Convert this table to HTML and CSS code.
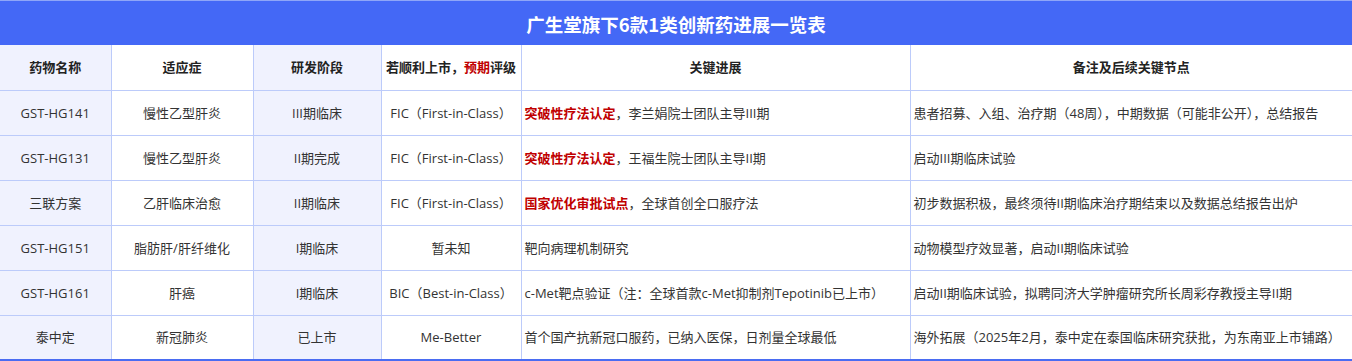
FILE: index.html
```html
<!DOCTYPE html>
<html lang="zh-CN">
<head>
<meta charset="utf-8">
<title>广生堂旗下6款1类创新药进展一览表</title>
<link rel="stylesheet" href="styles.css">
</head>
<body>
<div class="sheet">
  <div class="title">广生堂旗下6款1类创新药进展一览表</div>
  <table class="grid">
    <colgroup>
      <col class="c1"><col class="c2"><col class="c3"><col class="c4"><col class="c5"><col class="c6">
    </colgroup>
    <thead>
      <tr>
        <th class="shade">药物名称</th>
        <th>适应症</th>
        <th class="shade">研发阶段</th>
        <th>若顺利上市，<span class="red">预期</span>评级</th>
        <th>关键进展</th>
        <th>备注及后续关键节点</th>
      </tr>
    </thead>
    <tbody>
      <tr>
        <td class="shade">GST-HG141</td>
        <td>慢性乙型肝炎</td>
        <td class="shade">III期临床</td>
        <td>FIC（First-in-Class）</td>
        <td class="left"><b class="red">突破性疗法认定</b>，李兰娟院士团队主导III期</td>
        <td class="left">患者招募、入组、治疗期（48周），中期数据（可能非公开），总结报告</td>
      </tr>
      <tr>
        <td class="shade">GST-HG131</td>
        <td>慢性乙型肝炎</td>
        <td class="shade">II期完成</td>
        <td>FIC（First-in-Class）</td>
        <td class="left"><b class="red">突破性疗法认定</b>，王福生院士团队主导II期</td>
        <td class="left">启动III期临床试验</td>
      </tr>
      <tr>
        <td class="shade">三联方案</td>
        <td>乙肝临床治愈</td>
        <td class="shade">II期临床</td>
        <td>FIC（First-in-Class）</td>
        <td class="left"><b class="red">国家优化审批试点</b>，全球首创全口服疗法</td>
        <td class="left">初步数据积极，最终须待II期临床治疗期结束以及数据总结报告出炉</td>
      </tr>
      <tr>
        <td class="shade">GST-HG151</td>
        <td>脂肪肝/肝纤维化</td>
        <td class="shade">I期临床</td>
        <td>暂未知</td>
        <td class="left">靶向病理机制研究</td>
        <td class="left">动物模型疗效显著，启动II期临床试验</td>
      </tr>
      <tr>
        <td class="shade">GST-HG161</td>
        <td>肝癌</td>
        <td class="shade">I期临床</td>
        <td>BIC（Best-in-Class）</td>
        <td class="left">c-Met靶点验证（注：全球首款c-Met抑制剂Tepotinib已上市）</td>
        <td class="left">启动II期临床试验，拟聘同济大学肿瘤研究所长周彩存教授主导II期</td>
      </tr>
      <tr>
        <td class="shade">泰中定</td>
        <td>新冠肺炎</td>
        <td class="shade">已上市</td>
        <td>Me-Better</td>
        <td class="left">首个国产抗新冠口服药，已纳入医保，日剂量全球最低</td>
        <td class="left">海外拓展（2025年2月，泰中定在泰国临床研究获批，为东南亚上市铺路）</td>
      </tr>
    </tbody>
  </table>
</div>
</body>
</html>
```

FILE: styles.css
```css
* { box-sizing: border-box; }
html, body { margin: 0; padding: 0; background: #ffffff; }
body {
  font-family: "Open Sans", "Noto Sans CJK SC", sans-serif;
  font-size: 13px;
  color: #333333;
}
.sheet { width: 1352px; }
.title {
  height: 45px;
  background: #4468f6;
  border-top: 1px solid #8fa6f8;
  color: #ffffff;
  font-family: "Noto Sans CJK SC", sans-serif;
  font-size: 18.5px;
  font-weight: bold;
  display: flex;
  align-items: center;
  justify-content: center;
  padding-top: 1px;
}
.grid {
  width: 1352px;
  table-layout: fixed;
  border-collapse: collapse;
  border-bottom: 2px solid #4a6cf2;
}
.c1 { width: 111px; }
.c2 { width: 142px; }
.c3 { width: 128px; }
.c4 { width: 140px; }
.c5 { width: 389px; }
.c6 { width: 442px; }
th, td {
  height: 45px;
  border: 1px solid #bccbfa;
  text-align: center;
  vertical-align: middle;
  padding: 0 2px;
  white-space: nowrap;
  overflow: hidden;
  line-height: 18px;
}
th {
  font-weight: bold;
  color: #222222;
  border-top: none;
}
tr > :first-child { border-left: none; }
tr > :last-child { border-right: none; }
.shade { background: #f0f2fe; }
.left { text-align: left; padding-left: 3px; }
.red { color: #c00000; }
b.red { font-weight: bold; }
```
